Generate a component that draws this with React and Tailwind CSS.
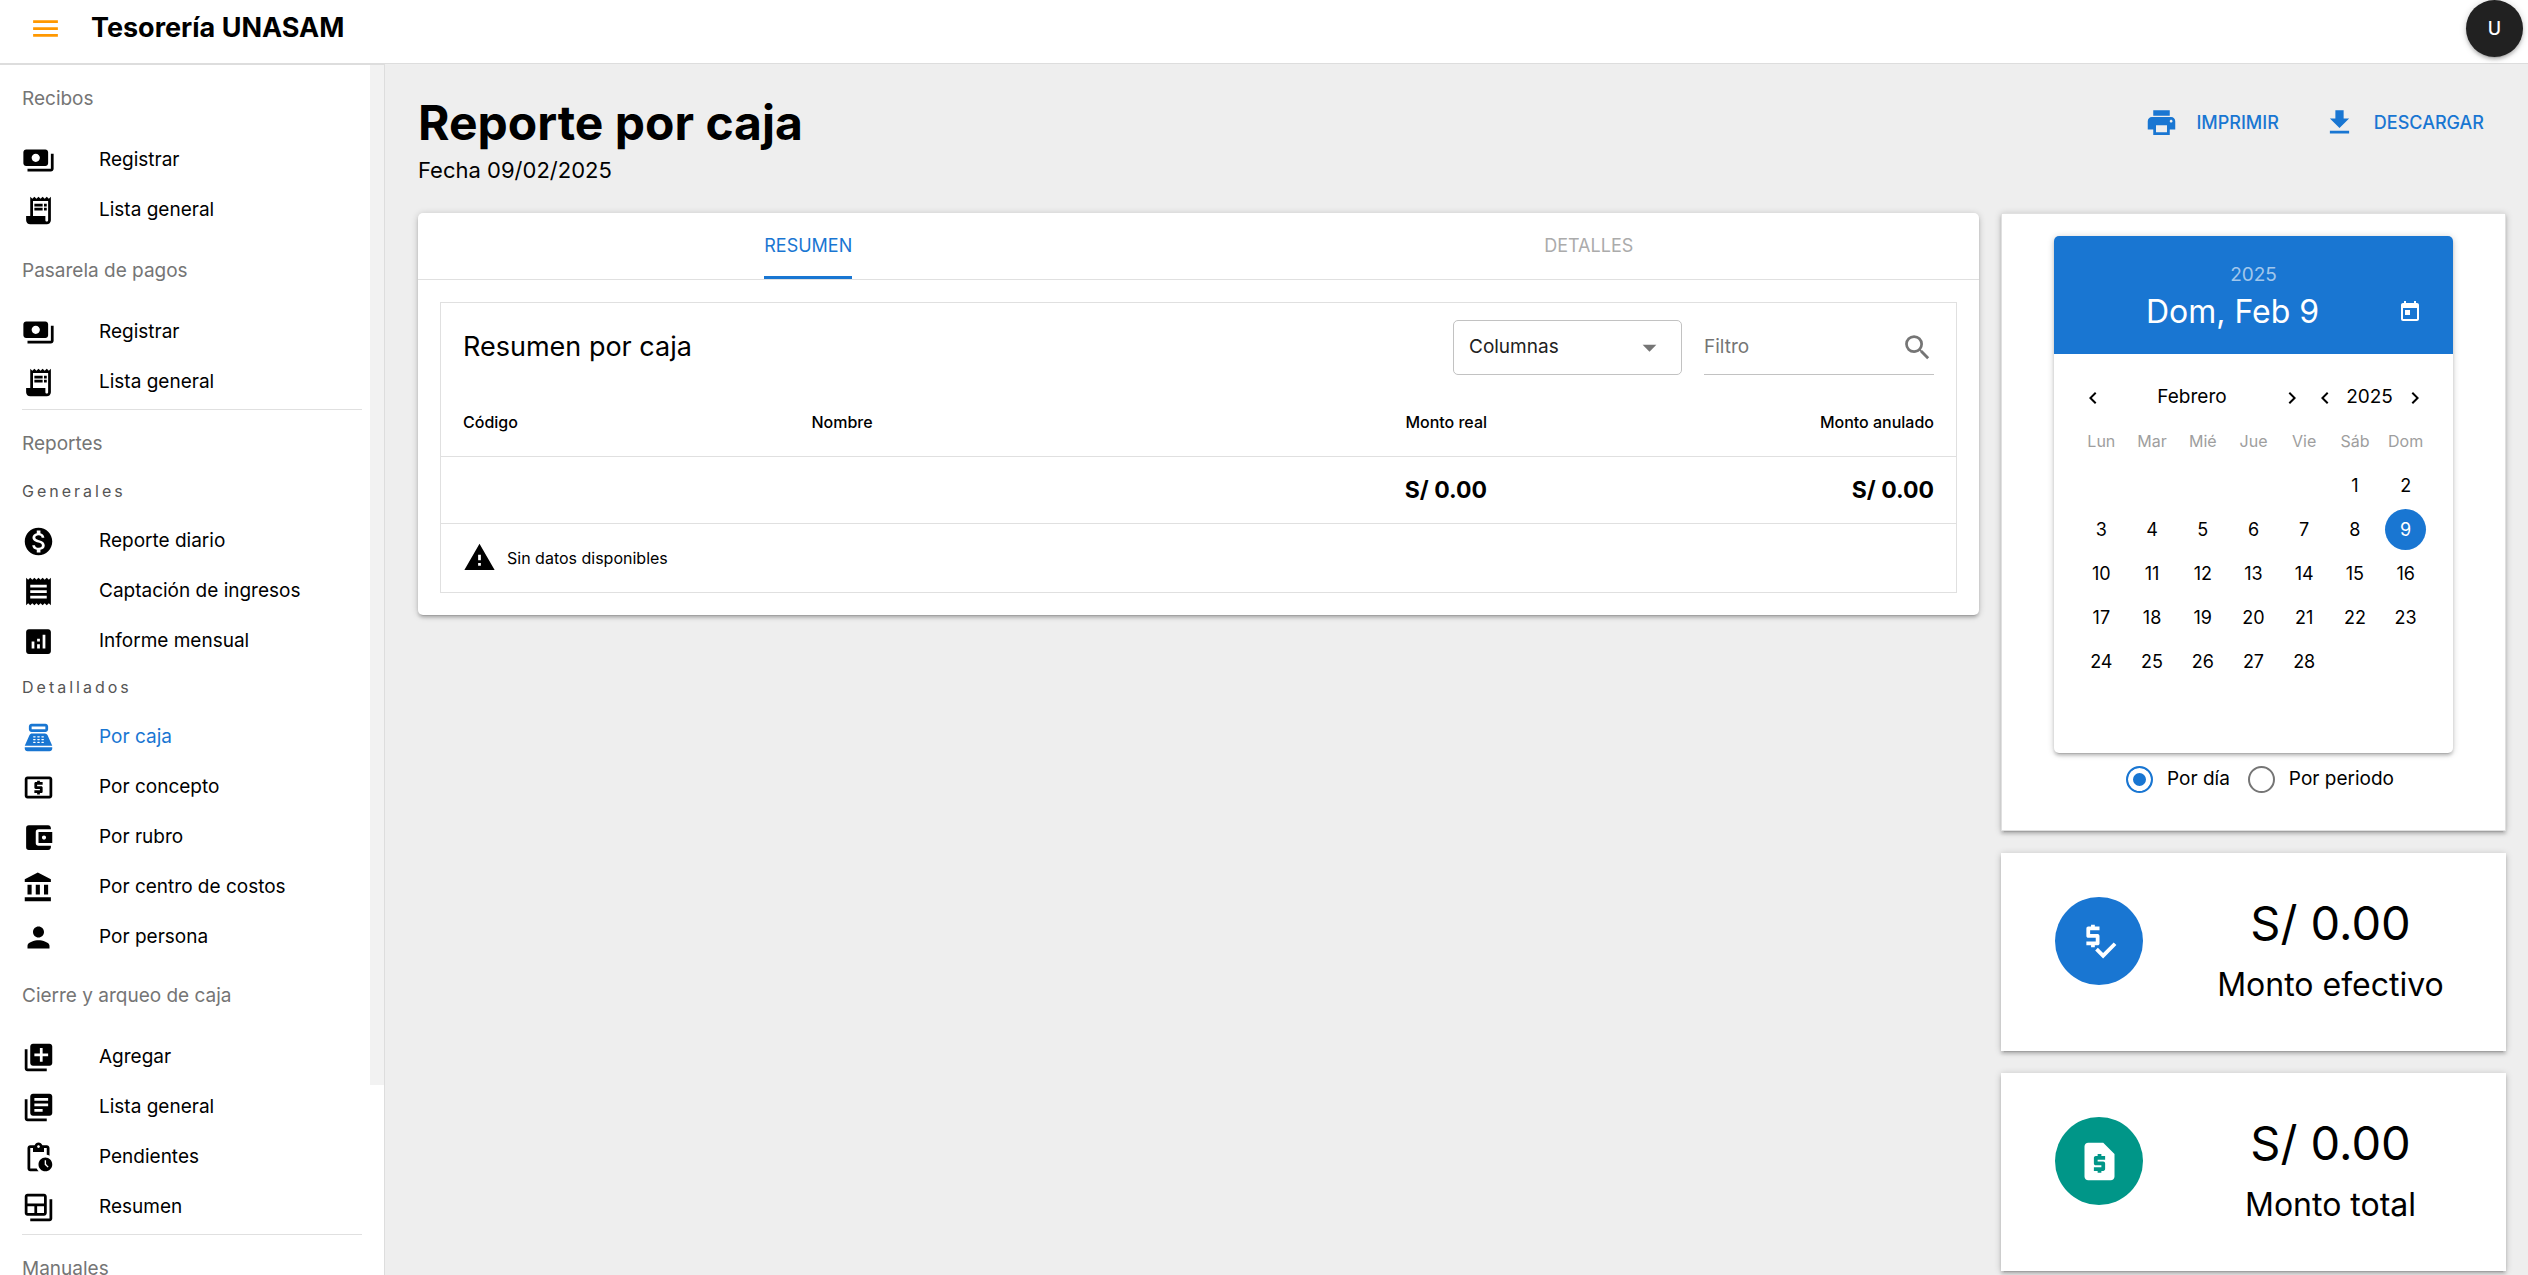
import React from 'react';
import {
  MdMenu,
  MdPayments,
  MdReceiptLong,
  MdMonetizationOn,
  MdReceipt,
  MdAnalytics,
  MdPointOfSale,
  MdLocalAtm,
  MdAccountBalanceWallet,
  MdPerson,
  MdAddToPhotos,
  MdLibraryBooks,
  MdPendingActions,
  MdBackupTable,
  MdPrint,
  MdGetApp,
  MdToday,
  MdChevronLeft,
  MdChevronRight,
  MdWarning,
  MdSearch,
  MdArrowDropDown,
  MdPriceCheck,
  MdRequestPage,
} from 'react-icons/md';

const elevation =
  'shadow-[0_1px_7px_rgba(0,0,0,0.2),0_3px_3px_rgba(0,0,0,0.14),0_4px_1px_-3px_rgba(0,0,0,0.12)]';

function BankIcon({ className }) {
  return (
    <svg viewBox="0 0 24 24" fill="currentColor" className={className} aria-hidden="true">
      <path d="M4 10v7h3v-7H4zm6 0v7h3v-7h-3zM2 22h19v-3H2v3zm14-12v7h3v-7h-3zm-4.5-9L2 6v2h19V6l-9.5-5z" />
    </svg>
  );
}

function NavHeading({ children }) {
  return (
    <h2 className="my-[3px] flex h-[66px] items-center text-[19px] text-[#757575]">{children}</h2>
  );
}

function NavCaption({ children }) {
  return (
    <h3 className="mb-2 flex h-[34px] items-center text-[16px] tracking-[3px] text-[#555555]">
      {children}
    </h3>
  );
}

function NavItem({ icon: Icon, active, children }) {
  return (
    <li>
      <a
        href="#"
        className={
          active
            ? 'flex h-[50px] items-center text-[19px] text-[#1976d2]'
            : 'flex h-[50px] items-center text-[19px] text-black'
        }
      >
        <Icon className="mr-[44px] size-[33px] shrink-0" />
        {children}
      </a>
    </li>
  );
}

function Divider() {
  return <hr className="mt-[2px] -mr-[14px] -mb-[2px] border-t border-[#e0e0e0]" />;
}

function Sidebar() {
  return (
    <aside className="flex w-[385px] shrink-0 overflow-hidden border-t border-r border-[#dddddd] bg-white">
      <nav className="-mt-[2px] min-w-0 flex-1 px-[22px]">
        <NavHeading>Recibos</NavHeading>
        <ul>
          <NavItem icon={MdPayments}>Registrar</NavItem>
          <NavItem icon={MdReceiptLong}>Lista general</NavItem>
        </ul>
        <NavHeading>Pasarela de pagos</NavHeading>
        <ul>
          <NavItem icon={MdPayments}>Registrar</NavItem>
          <NavItem icon={MdReceiptLong}>Lista general</NavItem>
        </ul>
        <Divider />
        <NavHeading>Reportes</NavHeading>
        <div className="-mt-[6px]">
          <NavCaption>Generales</NavCaption>
        </div>
        <ul>
          <NavItem icon={MdMonetizationOn}>Reporte diario</NavItem>
          <NavItem icon={MdReceipt}>Captación de ingresos</NavItem>
          <NavItem icon={MdAnalytics}>Informe mensual</NavItem>
        </ul>
        <div className="pt-1">
          <NavCaption>Detallados</NavCaption>
        </div>
        <ul className="-mb-[2px]">
          <NavItem icon={MdPointOfSale} active>
            Por caja
          </NavItem>
          <NavItem icon={MdLocalAtm}>Por concepto</NavItem>
          <NavItem icon={MdAccountBalanceWallet}>Por rubro</NavItem>
          <NavItem icon={BankIcon}>Por centro de costos</NavItem>
          <NavItem icon={MdPerson}>Por persona</NavItem>
        </ul>
        <NavHeading>Cierre y arqueo de caja</NavHeading>
        <ul>
          <NavItem icon={MdAddToPhotos}>Agregar</NavItem>
          <NavItem icon={MdLibraryBooks}>Lista general</NavItem>
          <NavItem icon={MdPendingActions}>Pendientes</NavItem>
          <NavItem icon={MdBackupTable}>Resumen</NavItem>
        </ul>
        <Divider />
        <NavHeading>Manuales</NavHeading>
      </nav>
      <div className="h-[1020px] w-[14px] shrink-0 bg-[#f2f2f2]" />
    </aside>
  );
}

function ActionButton({ icon: Icon, children }) {
  return (
    <button
      type="button"
      className="flex h-[58px] items-center gap-[18px] px-[22px] text-[18px] font-medium text-[#1976d2]"
    >
      <Icon className="size-[33px]" />
      {children}
    </button>
  );
}

function ReportTable() {
  return (
    <section className="border border-[#e0e0e0]">
      <div className="flex items-center gap-[22px] px-[22px] pt-[17px] pb-4">
        <h2 className="flex-1 text-[27px]">Resumen por caja</h2>
        <div className="relative w-[229px]">
          <select
            aria-label="Columnas"
            className="h-[55px] w-full appearance-none rounded-[5px] border border-[#c2c2c2] bg-white px-[15px] text-[19px] text-[#212121]"
          >
            <option>Columnas</option>
          </select>
          <MdArrowDropDown className="pointer-events-none absolute top-[11px] right-4 size-[33px] text-[#757575]" />
        </div>
        <label className="flex h-[55px] w-[230px] items-center border-b border-[#c2c2c2]">
          <input
            type="text"
            aria-label="Filtro"
            placeholder="Filtro"
            className="min-w-0 flex-1 text-[19px] outline-none placeholder:text-[#757575]"
          />
          <MdSearch className="size-[33px] text-[#757575]" />
        </label>
      </div>
      <table className="w-full table-fixed border-collapse">
        <colgroup>
          <col className="w-[23%]" />
          <col className="w-[24%]" />
          <col className="w-[23.5%]" />
          <col className="w-[29.5%]" />
        </colgroup>
        <thead>
          <tr className="h-[65px] border-b border-[#e0e0e0] text-[16px]">
            <th className="px-[22px] pb-[2px] text-left font-medium">Código</th>
            <th className="px-[22px] pb-[2px] text-left font-medium">Nombre</th>
            <th className="px-[22px] pb-[2px] text-right font-medium">Monto real</th>
            <th className="px-[22px] pb-[2px] text-right font-medium">Monto anulado</th>
          </tr>
        </thead>
        <tbody>
          <tr className="h-[67px] border-b border-[#e0e0e0] text-[23px] font-bold">
            <td />
            <td />
            <td className="px-[22px] pt-[2px] text-right">S/ 0.00</td>
            <td className="px-[22px] pt-[2px] text-right">S/ 0.00</td>
          </tr>
        </tbody>
      </table>
      <div className="flex h-[68px] items-center gap-[11px] px-[22px] text-[16px]">
        <MdWarning className="size-[33px]" />
        Sin datos disponibles
      </div>
    </section>
  );
}

function SummaryCard() {
  return (
    <div className={`min-w-0 flex-1 self-start rounded-[5px] bg-white ${elevation}`}>
      <div role="tablist" className="grid grid-cols-2 justify-items-center border-b border-[#e0e0e0]">
        <button
          type="button"
          role="tab"
          aria-selected="true"
          className="h-[66px] border-b-[3px] border-[#1976d2] pt-[2px] text-[18px] text-[#1976d2]"
        >
          RESUMEN
        </button>
        <button
          type="button"
          role="tab"
          aria-selected="false"
          className="h-[66px] border-b-[3px] border-transparent pt-[2px] text-[18px] text-[#ababab]"
        >
          DETALLES
        </button>
      </div>
      <div className="p-[22px]">
        <ReportTable />
      </div>
    </div>
  );
}

const weekdays = ['Lun', 'Mar', 'Mié', 'Jue', 'Vie', 'Sáb', 'Dom'];
const days = Array.from({ length: 28 }, (_, i) => i + 1);

function Chevron({ label, right }) {
  return (
    <button type="button" aria-label={label} className="flex size-[33px] items-center justify-center">
      {right ? <MdChevronRight className="size-6" /> : <MdChevronLeft className="size-6" />}
    </button>
  );
}

function DatePicker() {
  return (
    <div className={`w-[399px] overflow-hidden rounded-[5px] bg-white ${elevation}`}>
      <div className="bg-[#1976d2] p-[22px] text-white">
        <div className="text-center text-[19px] leading-[34px] text-white/60">2025</div>
        <div className="flex h-10 items-center">
          <div className="flex-1 text-center text-[32px] leading-10">Dom, Feb 9</div>
          <button type="button" aria-label="Hoy" className="flex w-[42px] justify-center">
            <MdToday className="size-6" />
          </button>
        </div>
      </div>
      <div className="px-[22px] pt-[22px] pb-[70px] text-[18px]">
        <div className="flex h-[43px] items-center text-[19px]">
          <Chevron label="Mes anterior" />
          <span className="flex-1 text-center">Febrero</span>
          <Chevron label="Mes siguiente" right />
          <Chevron label="Año anterior" />
          <span className="w-[57px] text-center">2025</span>
          <Chevron label="Año siguiente" right />
        </div>
        <div className="grid h-11 grid-cols-7 items-center text-center text-[16px] text-[#9e9e9e]">
          {weekdays.map((d) => (
            <span key={d}>{d}</span>
          ))}
        </div>
        <div className="grid auto-rows-[44px] grid-cols-7 place-items-center">
          {days.map((d) => (
            <button
              key={d}
              type="button"
              className={
                d === 9
                  ? 'size-[41px] rounded-full bg-[#1976d2] text-white'
                  : d === 1
                    ? 'col-start-6 size-[41px] rounded-full'
                    : 'size-[41px] rounded-full'
              }
            >
              {d}
            </button>
          ))}
        </div>
      </div>
    </div>
  );
}

function Radio({ label, checked }) {
  return (
    <label className="flex items-center gap-[14px] text-[19px]">
      <input
        type="radio"
        name="modo"
        defaultChecked={checked}
        className="size-[27px] appearance-none rounded-full border-2 border-[#757575] checked:border-[#1976d2] checked:bg-[#1976d2] checked:shadow-[inset_0_0_0_5px_white]"
      />
      {label}
    </label>
  );
}

function StatCard({ icon: Icon, circle, value, label }) {
  return (
    <div className={`flex items-start bg-white pt-10 pb-[34px] pl-[54px] ${elevation}`}>
      <div className={`mt-1 flex size-[88px] items-center justify-center rounded-full text-white ${circle}`}>
        <Icon className="size-[45px]" />
      </div>
      <div className="ml-3 flex-1 text-center">
        <div className="text-[47px] leading-[60px]">{value}</div>
        <div className="text-[32px] leading-[64px]">{label}</div>
      </div>
    </div>
  );
}

export default function App() {
  return (
    <div className="flex h-screen flex-col overflow-hidden bg-[#eeeeee] font-['Inter',sans-serif] text-black">
      <header className="flex h-16 shrink-0 items-start border-b border-[#dddddd] bg-white pr-[5px] pl-[29px]">
        <button type="button" aria-label="Menú" className="flex h-[57px] items-center text-[#ff9800]">
          <MdMenu className="size-[33px]" />
        </button>
        <h1 className="ml-[29px] flex-1 text-[27px] leading-[56px] font-bold">Tesorería UNASAM</h1>
        <button
          type="button"
          className={`flex size-[57px] items-center justify-center rounded-full bg-[#212121] text-[18px] font-medium text-white ${elevation}`}
        >
          U
        </button>
      </header>
      <div className="flex min-h-0 flex-1">
        <Sidebar />
        <main className="min-w-0 flex-1 pt-[29px] pr-[22px] pl-[33px]">
          <div className="mb-[26px] flex items-start">
            <div className="flex-1">
              <h1 className="text-[48px] leading-[60px] font-bold">Reporte por caja</h1>
              <p className="text-[22px] leading-[34px]">Fecha 09/02/2025</p>
            </div>
            <ActionButton icon={MdPrint}>IMPRIMIR</ActionButton>
            <ActionButton icon={MdGetApp}>DESCARGAR</ActionButton>
          </div>
          <div className="flex gap-[22px]">
            <SummaryCard />
            <div className="flex w-[505px] shrink-0 flex-col gap-[22px]">
              <div
                className={`flex flex-col items-center border border-[#e0e0e0] bg-white pt-[22px] pb-[25px] ${elevation}`}
              >
                <DatePicker />
                <div className="flex h-[52px] items-center gap-[18px] pl-[13px]">
                  <Radio label="Por día" checked />
                  <Radio label="Por periodo" />
                </div>
              </div>
              <StatCard icon={MdPriceCheck} circle="bg-[#1976d2]" value="S/ 0.00" label="Monto efectivo" />
              <StatCard icon={MdRequestPage} circle="bg-[#009688]" value="S/ 0.00" label="Monto total" />
            </div>
          </div>
        </main>
      </div>
    </div>
  );
}
